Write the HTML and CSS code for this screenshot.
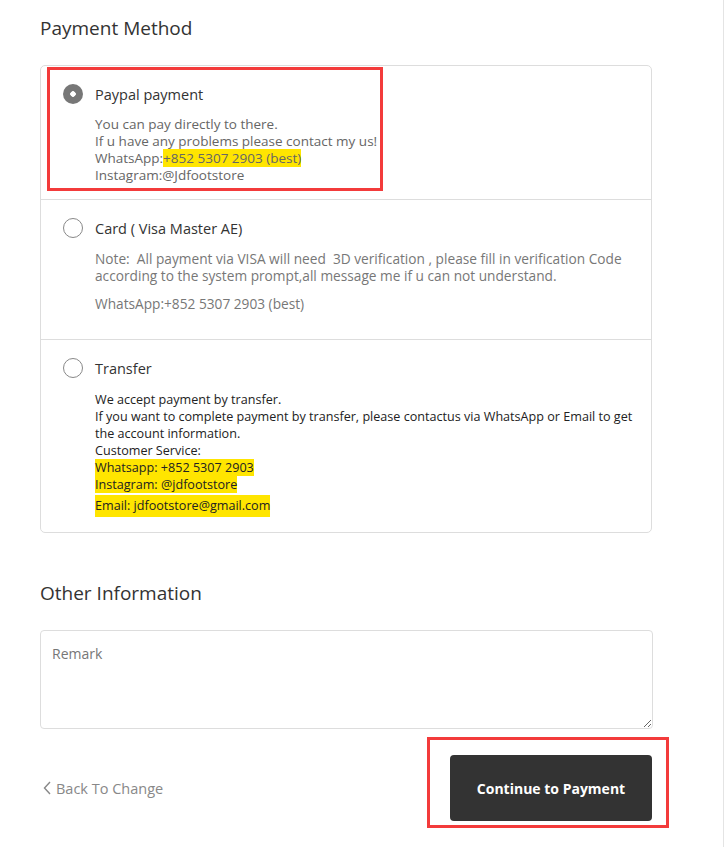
FILE: index.html
```html
<!DOCTYPE html>
<html lang="en">
<head>
    <meta charset="utf-8" />
    <title>Payment</title>
    <link rel="stylesheet" href="styles.css">
</head>
<body>
    <div class="page">
        <h2 class="title">Payment Method</h2>
        <div class="methods">
            <div class="method">
                <div class="mark mark-paypal"></div>
                <div class="head">
                    <span class="radio checked"></span>
                    <span class="label">Paypal payment</span>
                </div>
                <div class="desc desc-grey">
                    You can pay directly to there.<br>
                    If u have any problems please contact my us!<br>
                    WhatsApp:<span class="hl">+852 5307 2903 (best)</span><br>
                    Instagram:@Jdfootstore
                </div>
            </div>
            <div class="method method-card">
                <div class="head">
                    <span class="radio"></span>
                    <span class="label">Card ( Visa Master AE)</span>
                </div>
                <div class="desc desc-light">
                    <p>Note:&nbsp;&nbsp;All payment via VISA will need&nbsp; 3D verification , please fill in verification Code<br>according to the system prompt,all message me if u can not understand.</p>
                    <p class="gap">WhatsApp:+852 5307 2903 (best)</p>
                </div>
            </div>
            <div class="method method-transfer">
                <div class="head">
                    <span class="radio"></span>
                    <span class="label">Transfer</span>
                </div>
                <div class="desc desc-dark">
                    We accept payment by transfer.<br>
                    If you want to complete payment by transfer, please contactus via WhatsApp or Email to get<br>
                    the account information.<br>
                    Customer Service:<br>
                    <span class="hl">Whatsapp: +852 5307 2903</span><br>
                    <span class="hl">Instagram: @jdfootstore</span>
                    <p class="mail"><span class="hl hl-big">Email: jdfootstore@gmail.com</span></p>
                </div>
            </div>
        </div>

        <h2 class="title title-other">Other Information</h2>
        <textarea class="remark" placeholder="Remark"></textarea>

        <div class="actions">
            <a class="back" href="#"><svg width="9" height="14" viewBox="0 0 9 14"><path d="M7 1 L1.5 7 L7 13" fill="none" stroke="#888" stroke-width="1.4"/></svg>Back To Change</a>
            <div class="btn-wrap">
                <div class="mark mark-btn"></div>
                <button class="continue">Continue to Payment</button>
            </div>
        </div>
    </div>
</body>
</html>
```

FILE: styles.css
```css
* {
    box-sizing: border-box;
}

body {
    margin: 0;
    font-family: "Open Sans", "Liberation Sans", "Noto Sans CJK SC", sans-serif;
    color: #333;
    background: #fff;
}

.page {
    width: 724px;
    min-height: 847px;
    border-right: 1px solid #e4e4e4;
    padding: 14px 71px 0 40px;
}

.title {
    margin: 0;
    font-size: 19px;
    font-weight: 400;
    line-height: 28px;
    color: #333;
}

.methods {
    margin-top: 23px;
    border: 1px solid #ddd;
    border-radius: 5px;
}

.method {
    position: relative;
    padding: 17px 10px 15px 22px;
    border-bottom: 1px solid #ddd;
}

.method-card {
    padding-bottom: 27px;
}

.method-transfer {
    border-bottom: none;
    padding-bottom: 15px;
}

.head {
    display: flex;
    align-items: center;
    height: 22px;
}

.radio {
    width: 20px;
    height: 20px;
    border-radius: 50%;
    border: 1.5px solid #888;
    margin-right: 12px;
    flex-shrink: 0;
}

.radio.checked {
    border: none;
    background: radial-gradient(circle, #fff 0 2.5px, #777 3px);
}

.label {
    font-size: 14.5px;
    color: #333;
}

.desc {
    margin: 11px 0 0 32px;
    font-size: 13.5px;
    line-height: 17px;
    white-space: nowrap;
}

.desc p {
    margin: 0;
}

.desc .gap {
    margin-top: 11px;
}

.desc-grey {
    color: #666;
}

.desc-light {
    color: #777;
    font-size: 13.7px;
}

.desc-dark {
    color: #222;
    font-size: 12.6px;
    margin-top: 12px;
}

.hl {
    background: #ffe500;
}

.desc .mail {
    margin-top: 2px;
}

.hl-big {
    display: inline-block;
    line-height: 22px;
}

.mark {
    position: absolute;
    border: 3px solid #f33b3b;
    pointer-events: none;
}

.mark-paypal {
    left: 6px;
    top: 1px;
    width: 336px;
    height: 124px;
}

.title-other {
    margin-top: 46px;
}

.remark {
    display: block;
    width: 613px;
    height: 99px;
    margin-top: 23px;
    padding: 13px 11px;
    border: 1px solid #ddd;
    border-radius: 4px;
    font-family: inherit;
    font-size: 14px;
    color: #333;
    resize: vertical;
}

.remark::placeholder {
    color: #777;
}

.actions {
    display: flex;
    justify-content: space-between;
    align-items: center;
    margin-top: 26px;
}

.back {
    display: flex;
    align-items: center;
    gap: 4px;
    font-size: 14.5px;
    color: #888;
    text-decoration: none;
    margin-left: 3px;
}

.btn-wrap {
    position: relative;
}

.mark-btn {
    left: -23px;
    top: -18px;
    right: -17px;
    bottom: -7px;
}

.continue {
    display: block;
    width: 202px;
    height: 66px;
    border: none;
    border-radius: 4px;
    background: #333;
    color: #fff;
    font-family: inherit;
    font-size: 14px;
    font-weight: 700;
}
```
